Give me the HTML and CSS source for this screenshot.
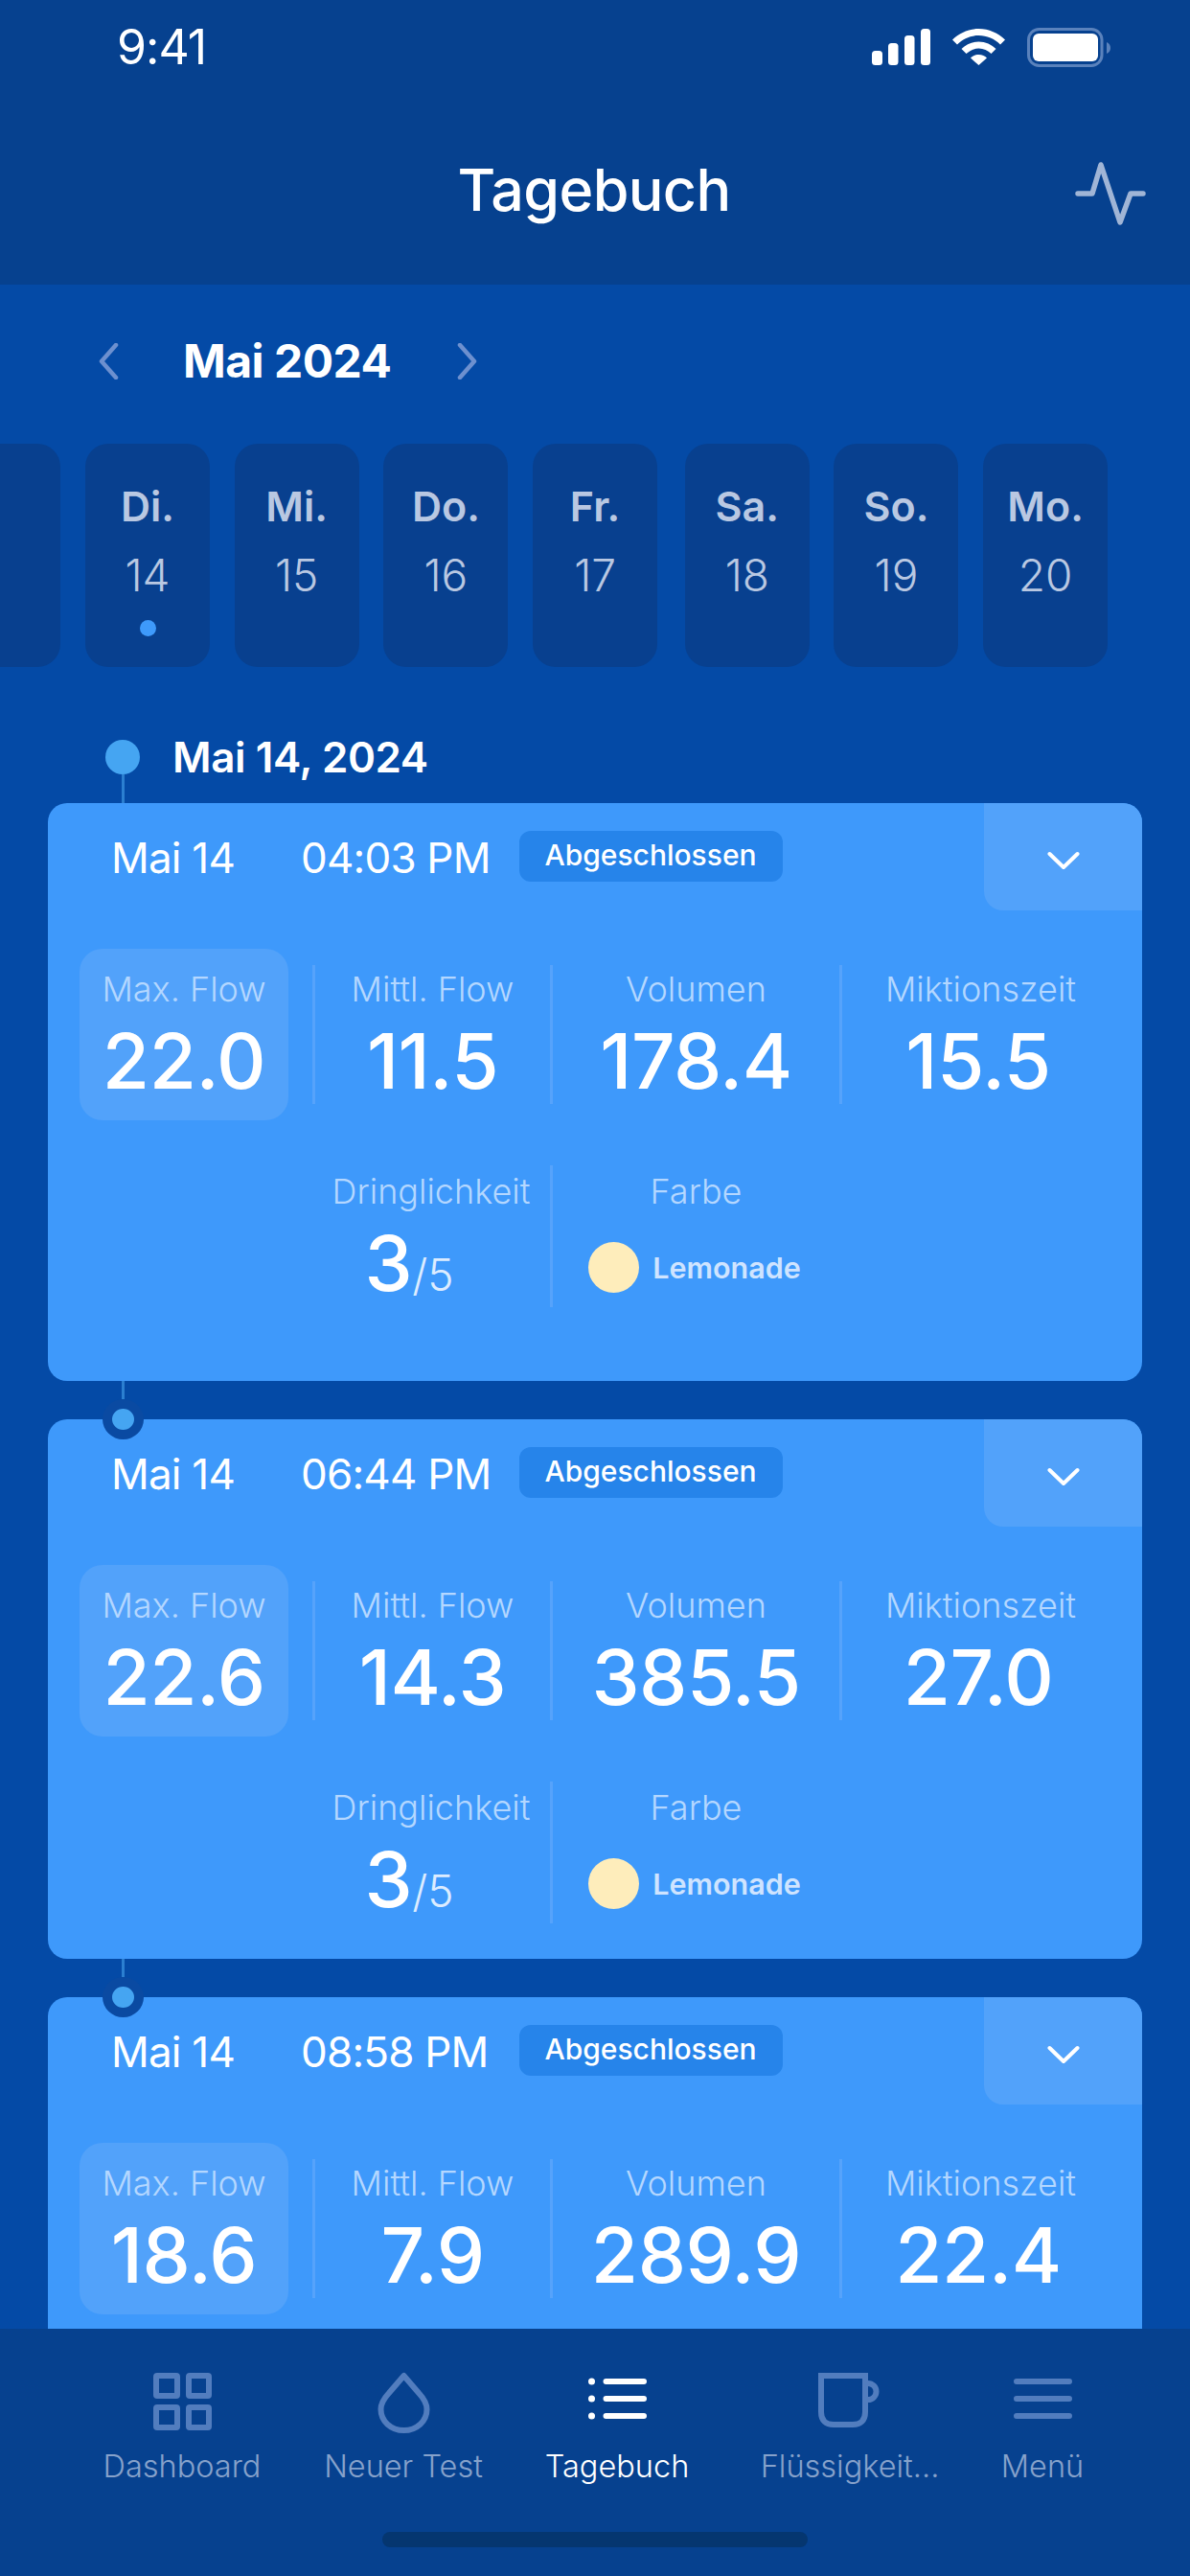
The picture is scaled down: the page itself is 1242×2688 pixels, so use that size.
FILE: index.html
```html
<!DOCTYPE html>
<html lang="de">
<head>
<meta charset="utf-8">
<title>Tagebuch</title>
<link rel="stylesheet" href="styles.css">
</head>
<body>
<div class="phone">
  <header class="top">
    <div class="status">
      <span class="clock">9:41</span>
      <div class="status-icons">
        <svg class="ic-signal" width="61" height="38" viewBox="0 0 61 38"><rect x="0" y="23" width="11" height="15" rx="3.500"/><rect x="17" y="15" width="10.500" height="23" rx="3.500"/><rect x="34" y="7" width="10.500" height="31" rx="3.500"/><rect x="51" y="0" width="10" height="38" rx="3.500"/></svg>
        <svg class="ic-wifi" width="55" height="38" viewBox="0 0 55 38"><path d="M0 11.500C7 4.500 17 0 27.500 0S48 4.500 55 11.500L50 16.500C44 10.500 36 7 27.500 7S11 10.500 5 16.500Z"/><path d="M9.500 21C14 16.500 20.500 13.500 27.500 13.500S41 16.500 45.500 21L40.500 26C37 22.800 32.500 20.500 27.500 20.500S18 22.800 14.500 26Z"/><path d="M19 30.500C21 28.500 24 27 27.500 27S34 28.500 36 30.500L27.500 38Z"/></svg>
        <svg class="ic-battery" width="87" height="41" viewBox="0 0 87 41"><rect x="1.500" y="1.500" width="76.500" height="38" rx="11" fill="none" stroke="#5a82bc" stroke-width="3"/><rect x="6" y="6" width="68" height="29" rx="6" fill="#fff"/><path d="M83 15C85.500 16 87 18 87 21S85.500 26 83 27Z" fill="#5a82bc"/></svg>
      </div>
    </div>
    <div class="titlebar">
      <h1 class="title">Tagebuch</h1>
      <svg class="ic-pulse" width="78" height="72" viewBox="0 0 78 72"><path d="M7 39H22L31 9L51 69L62 39H75"/></svg>
    </div>
  </header>

  <main class="content">
    <div class="month">
      <svg class="month-arrow" width="22" height="38" viewBox="0 0 22 38"><path d="M19 2L4 19L19 36"/></svg>
      <span class="month-name">Mai 2024</span>
      <svg class="month-arrow" width="22" height="38" viewBox="0 0 22 38"><path d="M3 2L18 19L3 36"/></svg>
    </div>

    <div class="days">
      <div class="day"></div>
      <div class="day"><b class="day-name">Di.</b><span class="day-num">14</span><i class="day-dot"></i></div>
      <div class="day"><b class="day-name">Mi.</b><span class="day-num">15</span></div>
      <div class="day"><b class="day-name">Do.</b><span class="day-num">16</span></div>
      <div class="day"><b class="day-name">Fr.</b><span class="day-num">17</span></div>
      <div class="day day-wide-gap"><b class="day-name">Sa.</b><span class="day-num">18</span></div>
      <div class="day"><b class="day-name">So.</b><span class="day-num">19</span></div>
      <div class="day"><b class="day-name">Mo.</b><span class="day-num">20</span></div>
    </div>

    <div class="date-row">
      <span class="date-dot"></span>
      <span class="date-text">Mai 14, 2024</span>
      <span class="date-link"></span>
    </div>

    <section class="card card-tall">
      <div class="card-head">
        <span class="when-date">Mai 14</span>
        <span class="when-time">04:03 PM</span>
        <span class="badge">Abgeschlossen</span>
        <span class="toggle"><svg width="34" height="20" viewBox="0 0 34 20"><path d="M2.500 3L17 17L31.500 3"/></svg></span>
      </div>
      <div class="stats">
        <div class="stat stat-main"><span class="stat-label">Max. Flow</span><span class="stat-value">22.0</span></div>
        <div class="stat"><span class="stat-label">Mittl. Flow</span><span class="stat-value">11.5</span></div>
        <div class="stat"><span class="stat-label">Volumen</span><span class="stat-value">178.4</span></div>
        <div class="stat stat-last"><span class="stat-label">Miktionszeit</span><span class="stat-value">15.5</span></div>
        <div class="stat stat-lower stat-urgency"><span class="stat-label">Dringlichkeit</span><span class="stat-value score">3<small class="score-max">/5</small></span></div>
        <div class="stat stat-lower"><span class="stat-label">Farbe</span><span class="colour"><i class="colour-dot"></i><span class="colour-name">Lemonade</span></span></div>
      </div>
    </section>

    <section class="card">
      <span class="link"></span><span class="node"></span>
      <div class="card-head">
        <span class="when-date">Mai 14</span>
        <span class="when-time">06:44 PM</span>
        <span class="badge">Abgeschlossen</span>
        <span class="toggle"><svg width="34" height="20" viewBox="0 0 34 20"><path d="M2.500 3L17 17L31.500 3"/></svg></span>
      </div>
      <div class="stats">
        <div class="stat stat-main"><span class="stat-label">Max. Flow</span><span class="stat-value">22.6</span></div>
        <div class="stat"><span class="stat-label">Mittl. Flow</span><span class="stat-value">14.3</span></div>
        <div class="stat"><span class="stat-label">Volumen</span><span class="stat-value">385.5</span></div>
        <div class="stat stat-last"><span class="stat-label">Miktionszeit</span><span class="stat-value">27.0</span></div>
        <div class="stat stat-lower stat-urgency"><span class="stat-label">Dringlichkeit</span><span class="stat-value score">3<small class="score-max">/5</small></span></div>
        <div class="stat stat-lower"><span class="stat-label">Farbe</span><span class="colour"><i class="colour-dot"></i><span class="colour-name">Lemonade</span></span></div>
      </div>
    </section>

    <section class="card">
      <span class="link"></span><span class="node"></span>
      <div class="card-head">
        <span class="when-date">Mai 14</span>
        <span class="when-time">08:58 PM</span>
        <span class="badge">Abgeschlossen</span>
        <span class="toggle"><svg width="34" height="20" viewBox="0 0 34 20"><path d="M2.500 3L17 17L31.500 3"/></svg></span>
      </div>
      <div class="stats">
        <div class="stat stat-main"><span class="stat-label">Max. Flow</span><span class="stat-value">18.6</span></div>
        <div class="stat"><span class="stat-label">Mittl. Flow</span><span class="stat-value">7.9</span></div>
        <div class="stat"><span class="stat-label">Volumen</span><span class="stat-value">289.9</span></div>
        <div class="stat stat-last"><span class="stat-label">Miktionszeit</span><span class="stat-value">22.4</span></div>
      </div>
    </section>
  </main>

  <nav class="tabbar">
    <div class="tabs">
      <div class="tab">
        <svg class="tab-icon tab-icon-grid" width="61" height="64" viewBox="0 0 61 64"><rect x="3" y="5" width="22" height="21" rx="1"/><rect x="37" y="5" width="21" height="21" rx="1"/><rect x="3" y="38" width="22" height="21" rx="1"/><rect x="37" y="38" width="21" height="21" rx="1"/></svg>
        <span class="tab-label">Dashboard</span>
      </div>
      <div class="tab">
        <svg class="tab-icon" width="61" height="64" viewBox="0 0 61 64"><path d="M30.500 5L15 23C9.500 29 6.500 34 6.500 40C6.500 52.500 17 62 30.500 62S54.500 52.500 54.500 40C54.500 34 51.500 29 46 23Z"/></svg>
        <span class="tab-label">Neuer Test</span>
      </div>
      <div class="tab tab-active">
        <svg class="tab-icon" width="61" height="64" viewBox="0 0 61 64"><circle cx="3.500" cy="11" r="3.500" class="fill"/><circle cx="3.500" cy="29" r="3.500" class="fill"/><circle cx="3.500" cy="47" r="3.500" class="fill"/><path d="M18.500 11H58M18.500 29H58M18.500 47H58"/></svg>
        <span class="tab-label">Tagebuch</span>
      </div>
      <div class="tab">
        <svg class="tab-icon tab-icon-mug" width="66" height="64" viewBox="0 0 66 64"><path d="M3 5H49V43C49 52 44 56 36 56H16C8 56 3 52 3 43Z"/><path d="M52 13A8.500 8.500 0 0 1 52 30"/></svg>
        <span class="tab-label">Flüssigkeit...</span>
      </div>
      <div class="tab">
        <svg class="tab-icon" width="61" height="64" viewBox="0 0 61 64"><path d="M3 11H58M3 29H58M3 47H58"/></svg>
        <span class="tab-label">Menü</span>
      </div>
    </div>
    <div class="home-bar"></div>
  </nav>
</div>
</body>
</html>
```
FILE: styles.css
```css
* { box-sizing: border-box; }
html, body { margin: 0; padding: 0; }
body {
  font-family: Inter, "Liberation Sans", sans-serif;
  background: #044aa6;
  color: #fff;
}
.phone {
  width: 1242px;
  height: 2688px;
  display: flex;
  flex-direction: column;
  overflow: hidden;
  background: #044aa6;
}

/* header */
.top { height: 297px; flex: none; background: #06418f; }
.status {
  height: 98px;
  display: flex;
  align-items: center;
  justify-content: space-between;
  padding: 0 83px 0 122px;
}
.clock { font-size: 50px; font-weight: 400; line-height: 60px; letter-spacing: -1px; }
.status-icons { display: flex; align-items: center; gap: 23px; }
.status-icons svg { fill: #fff; display: block; }
.titlebar {
  position: relative;
  height: 104px;
  margin-top: 48px;
  display: flex;
  align-items: center;
  justify-content: center;
}
.title { margin: 0 2px 0 0; font-size: 61px; font-weight: 500; letter-spacing: -0.6px; line-height: 72px; }
.ic-pulse {
  position: absolute;
  right: 46px;
  top: 17px;
  fill: none;
  stroke: #a0b5d6;
  stroke-width: 5.500;
  stroke-linecap: round;
  stroke-linejoin: round;
}

/* content */
.content { flex: 1; min-height: 0; overflow: hidden; padding-top: 50px; }
.month { height: 60px; display: flex; align-items: center; padding-left: 102px; }
.month-arrow { fill: none; stroke: #6d90cf; stroke-width: 4.500; stroke-linecap: round; stroke-linejoin: round; flex: none; }
.month-name { font-size: 48px; font-weight: 700; letter-spacing: -0.5px; line-height: 60px; margin: 0 68px 0 67px; }

.days { display: flex; gap: 25.700px; margin: 56px 0 0 -66.700px; }
.day {
  width: 130px;
  height: 233px;
  flex: none;
  border-radius: 24px;
  background: #08408f;
  color: #b9c8e2;
  display: flex;
  flex-direction: column;
  align-items: center;
  padding-top: 39px;
}
.day-wide-gap { margin-left: 3px; }
.day-name { font-size: 43px; font-weight: 600; line-height: 52px; }
.day-num { font-size: 46px; font-weight: 300; line-height: 54px; margin-top: 19px; }
.day-dot { width: 17px; height: 17px; border-radius: 50%; background: #3e9afb; margin-top: 20px; }

/* date line */
.date-row {
  position: relative;
  display: flex;
  align-items: center;
  gap: 34px;
  height: 50px;
  margin-top: 69px;
  padding-left: 110px;
}
.date-dot { width: 36px; height: 36px; border-radius: 50%; background: #45a5f2; flex: none; }
.date-text { font-size: 44px; font-weight: 600; letter-spacing: -0.4px; line-height: 50px; }
.date-link { position: absolute; left: 126.500px; top: 43px; width: 3px; height: 30px; background: #2b7fd0; }

/* card */
.card {
  position: relative;
  margin: 40px 50px 0;
  background: #3e99fb;
  border-radius: 20px;
  padding-bottom: 37px;
}
.date-row + .card { margin-top: 23px; }
.card-tall { padding-bottom: 77px; }
.link { position: absolute; left: 76.500px; top: -40px; width: 3px; height: 19px; background: #2b7fd0; }
.node {
  position: absolute;
  left: 56.500px;
  top: -21px;
  width: 43px;
  height: 42px;
  border-radius: 50%;
  background: #45a5f2;
  border: 10px solid #0a4aa2;
}
.card-head { display: flex; align-items: center; height: 112px; padding-left: 66px; }
.when-date { font-size: 44px; line-height: 54px; width: 198px; flex: none; margin-top: 2px; letter-spacing: -0.8px; }
.when-time { font-size: 44px; line-height: 54px; width: 227.500px; flex: none; margin-top: 2px; letter-spacing: -0.8px; }
.badge {
  height: 53px;
  width: 275px;
  flex: none;
  margin-top: -2px;
  border-radius: 12px;
  background: #2684ea;
  font-size: 30px;
  font-weight: 500;
  line-height: 50px;
  text-align: center;
}
.toggle {
  margin-left: auto;
  width: 165px;
  height: 112px;
  flex: none;
  display: flex;
  align-items: center;
  justify-content: center;
  background: #52a2fa;
  border-radius: 0 20px 0 20px;
}
.toggle svg { fill: none; stroke: #fff; stroke-width: 4; stroke-linecap: round; stroke-linejoin: round; margin-top: 8px; }

.stats {
  display: grid;
  grid-template-columns: 243px 248px 302px 292px;
  grid-template-rows: 179px 148px;
  row-gap: 47px;
  margin: 40px 0 0 33px;
}
.stat {
  display: flex;
  flex-direction: column;
  align-items: center;
  align-self: center;
  height: 145px;
  padding-top: 2px;
  border-left: 3px solid #56a3fb;
}
.stat-main {
  width: 218px;
  height: 179px;
  padding-top: 19px;
  align-self: stretch;
  border-left: 0;
  border-radius: 24px;
  background: #52a2fa;
}
.stat-lower { height: 148px; padding-top: 4px; }
.stat-urgency { grid-column: 2; border-left-color: transparent; padding-right: 3px; }
.stat-label { font-size: 36px; font-weight: 300; line-height: 46px; color: #b4d7ff; white-space: nowrap; }
.stat-value { font-size: 80px; font-weight: 500; line-height: 80px; margin-top: 12px; letter-spacing: -0.5px; white-space: nowrap; }
.stat-last .stat-value { margin-right: 5px; }
.score { margin-right: 46px; }
.score-max { font-size: 46px; font-weight: 300; color: #dcecff; letter-spacing: 0; }
.colour { display: flex; align-items: center; gap: 14px; margin: 30px 3px 0 0; }
.colour-dot { width: 53px; height: 53px; border-radius: 50%; background: #feedbb; flex: none; }
.colour-name { font-size: 30.500px; font-weight: 600; color: #cfe4ff; }

/* tab bar */
.tabbar { height: 258px; flex: none; background: #06418f; padding-top: 44px; }
.tabs {
  display: grid;
  grid-template-columns: 231px 231px 215px 271px 131px;
  padding-left: 74.500px;
}
.tab { display: flex; flex-direction: column; align-items: center; color: #86a2cb; }
.tab-active { color: #fff; }
.tab-icon { fill: none; stroke: #527dbe; stroke-width: 6; stroke-linecap: round; stroke-linejoin: round; display: block; overflow: visible; }
.tab-icon-grid, .tab-icon-mug { stroke-linecap: butt; stroke-linejoin: miter; }
.tab-active .tab-icon { stroke: #fff; }
.tab-active .fill { fill: #fff; stroke: none; }
.tab-label { font-size: 32.500px; font-weight: 300; line-height: 44px; margin-top: 14px; white-space: nowrap; }
.home-bar { width: 444px; height: 16px; border-radius: 8px; background: #053670; margin: 46px auto 0; }
```
